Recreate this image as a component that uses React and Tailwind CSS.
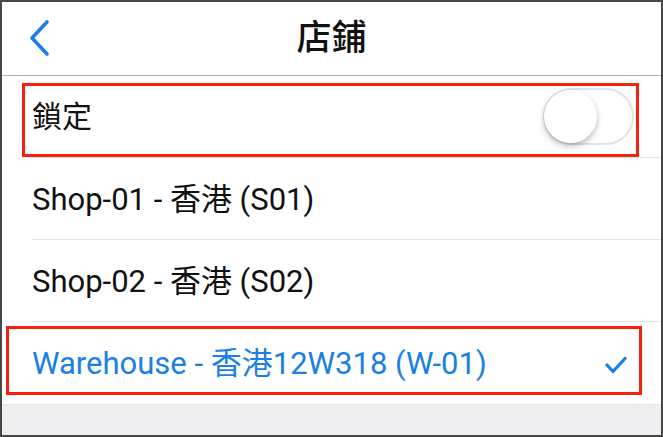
import React, { useState } from 'react';

const font = { fontFamily: 'Roboto, "Noto Sans CJK TC", sans-serif' };

const shops = [
    { id: 'S01', label: 'Shop-01 - 香港 (S01)' },
    { id: 'S02', label: 'Shop-02 - 香港 (S02)' },
    { id: 'W-01', label: 'Warehouse - 香港12W318 (W-01)' },
];

const App = () => {
    const [locked, setLocked] = useState(false);
    const [selected, setSelected] = useState('W-01');

    return (
        <div className="w-[663px] h-[437px] flex flex-col bg-white border-2 border-[#474747] overflow-hidden" style={font}>
            {/* Header */}
            <header className="relative h-[74px] shrink-0 flex items-center justify-center border-b border-[#b4b4b4]">
                <button className="absolute left-[22px] top-[17px] w-[30px] h-[38px] flex items-center justify-center text-[#1a7fe6]">
                    <svg width="22" height="36" viewBox="0 0 22 36" fill="none">
                        <polyline points="19,2 4,18 19,34" stroke="currentColor" strokeWidth="3.6" strokeLinecap="round" strokeLinejoin="round" />
                    </svg>
                </button>
                <h1 className="text-[35px] font-medium text-[#111] leading-none">店鋪</h1>
            </header>

            {/* Lock row */}
            <div className="relative h-[82px] shrink-0 pl-[30px]">
                <div className="h-full flex items-center justify-between border-b border-[#e4e4e4] pr-[27px]">
                    <span className="text-[30px] text-[#111]">鎖定</span>
                    <button
                        onClick={() => setLocked(!locked)}
                        className={`relative w-[91px] h-[57px] rounded-full border-2 ${locked ? 'bg-[#4cd964] border-[#4cd964]' : 'bg-white border-[#e3e3e3]'}`}
                    >
                        <span className={`absolute top-[0px] ${locked ? 'left-[34px]' : 'left-[-1px]'} w-[53px] h-[53px] rounded-full bg-white shadow-[0_3px_6px_rgba(0,0,0,0.28)]`}></span>
                    </button>
                </div>
                <div className="absolute left-[20px] top-[7px] w-[617px] h-[74px] border-[3px] border-[#f4220f] pointer-events-none"></div>
            </div>

            {/* Shop list */}
            {shops.map((shop, i) => {
                const active = selected === shop.id;
                const last = i === shops.length - 1;
                return (
                    <div key={shop.id} className="relative h-[82px] shrink-0 pl-[30px] cursor-pointer" onClick={() => setSelected(shop.id)}>
                        <div className={`h-full flex items-center justify-between pr-[34px] pt-[3px] ${last ? '' : 'border-b border-[#e4e4e4]'}`}>
                            <span className={`text-[31px] ${active ? 'text-[#1a7fe6]' : 'text-[#111]'}`}>{shop.label}</span>
                            {active && (
                                <svg width="22" height="18" viewBox="0 0 22 18" fill="none">
                                    <polyline points="2,9 8,15.5 20,2.5" stroke="#1a7fe6" strokeWidth="3.2" strokeLinecap="round" strokeLinejoin="round" />
                                </svg>
                            )}
                        </div>
                        {last && (
                            <div className="absolute left-[4px] top-[4px] w-[636px] h-[69px] border-[3px] border-[#f4220f] pointer-events-none"></div>
                        )}
                    </div>
                );
            })}

            <div className="flex-1 bg-[#efeff1] border-t border-[#e4e4e4]"></div>
        </div>
    );
};

export default App;
